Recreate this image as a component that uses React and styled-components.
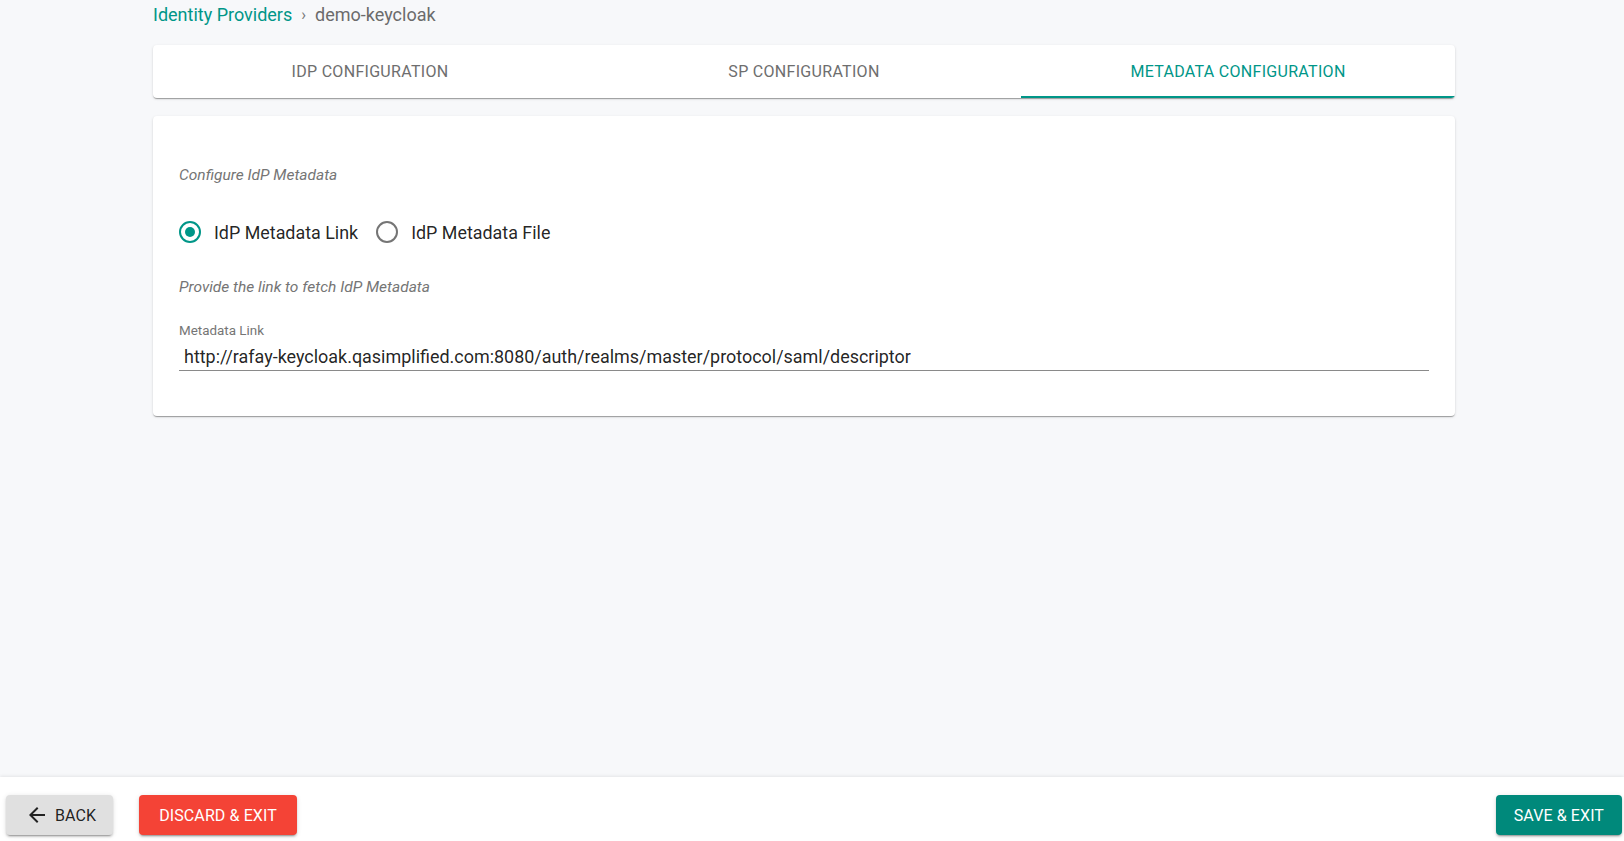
import { useState } from 'react'
import { createGlobalStyle, styled } from 'styled-components'

const GlobalStyle = createGlobalStyle`
    html, body {
        margin: 0;
        padding: 0;
        background: #f7f8fa;
        font-family: Roboto, "Liberation Sans", Arial, sans-serif;
    }
    * {
        box-sizing: border-box;
    }
`

const Page = styled.div`
    display: flex;
    flex-direction: column;
    min-height: 100vh;
`

const Main = styled.main`
    flex: 1;
    display: flex;
    flex-direction: column;
    padding: 0 169px 0 153px;
`

const Breadcrumbs = styled.nav`
    display: flex;
    align-items: center;
    gap: 9px;
    height: 28px;
    font-size: 18px;
    color: #6b6b6b;
`

const CrumbLink = styled.a`
    color: #009688;
    text-decoration: none;
`

const Separator = styled.span`
    font-size: 16px;
    color: #757575;
`

const TabsCard = styled.div`
    display: grid;
    grid-template-columns: repeat(3, 1fr);
    margin-top: 17px;
    height: 53px;
    background: #fff;
    border-radius: 4px;
    box-shadow: 0 2px 1px -1px rgba(0, 0, 0, 0.2), 0 1px 1px 0 rgba(0, 0, 0, 0.14), 0 1px 3px 0 rgba(0, 0, 0, 0.12);
    overflow: hidden;
`

const Tab = styled.button`
    display: flex;
    align-items: center;
    justify-content: center;
    border: none;
    background: transparent;
    font-family: inherit;
    font-size: 16px;
    font-weight: 400;
    letter-spacing: 0.3px;
    text-transform: uppercase;
    color: ${props => (props.$active ? '#009688' : '#6e6e6e')};
    border-bottom: 2px solid ${props => (props.$active ? '#009688' : 'transparent')};
    padding: 2px 0 0;
    cursor: pointer;
`

const Card = styled.section`
    margin-top: 18px;
    background: #fff;
    border-radius: 4px;
    padding: 48px 26px 45px;
    box-shadow: 0 2px 1px -1px rgba(0, 0, 0, 0.2), 0 1px 1px 0 rgba(0, 0, 0, 0.14), 0 1px 3px 0 rgba(0, 0, 0, 0.12);
`

const Hint = styled.p`
    margin: 0;
    font-size: 15.5px;
    line-height: 22px;
    font-style: italic;
    color: #757575;
`

const RadioGroup = styled.div`
    display: flex;
    align-items: center;
    gap: 18px;
    height: 42px;
    margin: 25px 0 23px;
`

const RadioLabel = styled.label`
    display: flex;
    align-items: center;
    gap: 13px;
    font-size: 17.9px;
    color: rgba(0, 0, 0, 0.87);
    cursor: pointer;
`

const RadioCircle = styled.span`
    display: flex;
    align-items: center;
    justify-content: center;
    width: 22px;
    height: 22px;
    border-radius: 50%;
    border: 2px solid ${props => (props.$checked ? '#009688' : '#757575')};

    &::after {
        content: '';
        width: 10px;
        height: 10px;
        border-radius: 50%;
        background: #009688;
        display: ${props => (props.$checked ? 'block' : 'none')};
    }
`

const Field = styled.div`
    display: flex;
    flex-direction: column;
    margin-top: 24px;
`

const FieldLabel = styled.label`
    font-size: 13.4px;
    line-height: 18px;
    color: #757575;
`

const Input = styled.input`
    border: none;
    border-bottom: 1px solid #8a8a8a;
    outline: none;
    padding: 4px 5px 2px;
    font-family: inherit;
    font-size: 17.95px;
    line-height: 24px;
    height: 31px;
    color: rgba(0, 0, 0, 0.87);
    background: transparent;
`

const Footer = styled.footer`
    display: flex;
    align-items: flex-start;
    gap: 26px;
    height: 64px;
    padding: 18px 2px 0 6px;
    background: #fff;
    box-shadow: 0 -1px 3px rgba(0, 0, 0, 0.08);
`

const Button = styled.button`
    display: flex;
    align-items: center;
    gap: 6px;
    height: 40px;
    padding: ${props => props.$padding || '0 20px'};
    border: none;
    border-radius: 4px;
    font-family: inherit;
    font-size: 16px;
    font-weight: 400;
    letter-spacing: 0.1px;
    text-transform: uppercase;
    color: ${props => props.$color || '#fff'};
    background: ${props => props.$bg};
    box-shadow: 0 3px 1px -2px rgba(0, 0, 0, 0.2), 0 2px 2px 0 rgba(0, 0, 0, 0.14), 0 1px 5px 0 rgba(0, 0, 0, 0.12);
    cursor: pointer;
`

const Spacer = styled.div`
    flex: 1;
`

const ArrowBack = () => (
    <svg width="24" height="24" viewBox="0 0 24 24" fill="#222">
        <path d="M20 11H7.83l5.59-5.59L12 4l-8 8 8 8 1.41-1.41L7.83 13H20v-2z" />
    </svg>
)

const tabs = ['IdP Configuration', 'SP Configuration', 'Metadata Configuration']

export default function App() {
    const [source, setSource] = useState('link')

    return (
        <Page>
            <GlobalStyle />
            <Main>
                <Breadcrumbs>
                    <CrumbLink href="#">Identity Providers</CrumbLink>
                    <Separator>›</Separator>
                    <span>demo-keycloak</span>
                </Breadcrumbs>

                <TabsCard>
                    {tabs.map((t, i) => (
                        <Tab key={t} $active={i === 2}>{t}</Tab>
                    ))}
                </TabsCard>

                <Card>
                    <Hint>Configure IdP Metadata</Hint>
                    <RadioGroup>
                        <RadioLabel onClick={() => setSource('link')}>
                            <RadioCircle $checked={source === 'link'} />
                            IdP Metadata Link
                        </RadioLabel>
                        <RadioLabel onClick={() => setSource('file')}>
                            <RadioCircle $checked={source === 'file'} />
                            IdP Metadata File
                        </RadioLabel>
                    </RadioGroup>
                    <Hint>Provide the link to fetch IdP Metadata</Hint>
                    <Field>
                        <FieldLabel>Metadata Link</FieldLabel>
                        <Input defaultValue="http://rafay-keycloak.qasimplified.com:8080/auth/realms/master/protocol/saml/descriptor" />
                    </Field>
                </Card>
            </Main>

            <Footer>
                <Button $bg="#e0e0e0" $color="rgba(0, 0, 0, 0.87)" $padding="0 17px 0 19px">
                    <ArrowBack />
                    Back
                </Button>
                <Button $bg="#f44336">Discard &amp; Exit</Button>
                <Spacer />
                <Button $bg="#00897b" $padding="0 18px">Save &amp; Exit</Button>
            </Footer>
        </Page>
    )
}
